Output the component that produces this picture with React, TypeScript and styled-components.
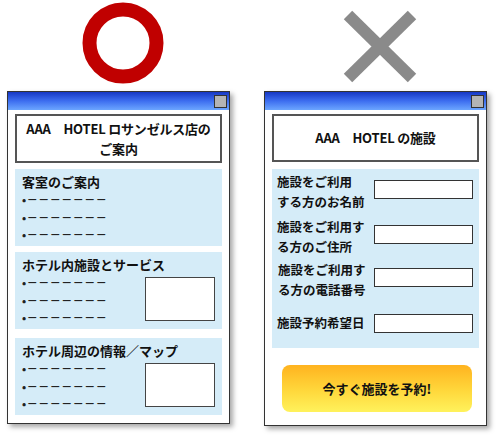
import styled, { createGlobalStyle } from 'styled-components';

const GlobalStyle = createGlobalStyle`
  html, body {
    margin: 0;
    padding: 0;
    background: #ffffff;
  }
  body {
    font-family: 'Noto Sans CJK JP', 'Noto Sans', sans-serif;
    color: #111111;
  }
`;

const Page = styled.div`
  display: flex;
  width: 499px;
  height: 438px;
  padding-left: 7px;
  box-sizing: border-box;
  gap: 34px;
`;

const Column = styled.div`
  display: flex;
  flex-direction: column;
  width: 223px;
`;

const Mark = styled.svg`
  display: block;
  width: 223px;
  height: 91px;
`;

interface WindowType {
  $height: number;
}

const Window = styled.div<WindowType>`
  display: flex;
  flex-direction: column;
  height: ${(props) => props.$height}px;
  box-sizing: border-box;
  border: 1px solid #333333;
  background: #ffffff;
  box-shadow: 3px 3px 5px rgba(0, 0, 0, 0.35);
`;

const TitleBar = styled.div`
  display: flex;
  justify-content: flex-end;
  align-items: center;
  height: 18px;
  padding-right: 2px;
  background: linear-gradient(to bottom, #1637c4 0%, #3d6ef0 50%, #6ca6ff 100%);
`;

const CloseButton = styled.div`
  width: 11px;
  height: 11px;
  border: 1px solid #333333;
  background: #b4b4b4;
`;

const Body = styled.div`
  display: flex;
  flex-direction: column;
  padding: 4px 7px 0 7px;
`;

interface HeadingType {
  $height: number;
}

const Heading = styled.div<HeadingType>`
  display: flex;
  align-items: center;
  justify-content: center;
  height: ${(props) => props.$height}px;
  box-sizing: border-box;
  border: 2px solid #555555;
  font-size: 13px;
  font-weight: 700;
  line-height: 20px;
  text-align: center;
  letter-spacing: -0.2px;
`;

interface SectionType {
  $top: number;
}

const Section = styled.div<SectionType>`
  margin-top: ${(props) => props.$top}px;
  height: 77px;
  box-sizing: border-box;
  padding: 4px 7px 0 7px;
  background: #d5ecf8;
`;

const SectionTitle = styled.div`
  font-size: 13px;
  font-weight: 600;
  line-height: 18px;
`;

const SectionRow = styled.div`
  display: flex;
  justify-content: space-between;
  align-items: flex-start;
`;

const BulletList = styled.ul`
  margin: 0;
  padding: 0;
  list-style: none;
`;

const Bullet = styled.li`
  font-size: 11px;
  font-weight: 600;
  line-height: 17.5px;
  letter-spacing: 0.5px;
  color: #222222;
`;

const Thumb = styled.div`
  width: 70px;
  height: 44px;
  box-sizing: border-box;
  margin-top: 3px;
  border: 1px solid #444444;
  background: #ffffff;
`;

const Form = styled.div`
  display: flex;
  flex-direction: column;
  margin-top: 7px;
  height: 179px;
  box-sizing: border-box;
  padding: 0 6px 0 5px;
  background: #d5ecf8;
`;

interface FieldRowType {
  $top: number;
}

const FieldRow = styled.div<FieldRowType>`
  display: flex;
  align-items: flex-start;
  margin-top: ${(props) => props.$top}px;
`;

interface FieldLabelType {
  $indent?: number;
}

const FieldLabel = styled.div<FieldLabelType>`
  width: 97px;
  box-sizing: border-box;
  padding-left: ${(props) => props.$indent || 0}px;
  font-size: 12.5px;
  font-weight: 600;
  line-height: 19.5px;
`;

interface FieldInputType {
  $offset: number;
}

const FieldInput = styled.div<FieldInputType>`
  width: 99px;
  height: 19px;
  box-sizing: border-box;
  margin-top: ${(props) => props.$offset}px;
  border: 1px solid #333333;
  background: #ffffff;
`;

const ButtonWrap = styled.div`
  display: flex;
  justify-content: center;
  padding: 17px 0 0 3px;
`;

const ReserveButton = styled.div`
  display: flex;
  align-items: center;
  justify-content: center;
  width: 190px;
  height: 47px;
  border-radius: 8px;
  background: linear-gradient(to bottom, #ffb31f 0%, #ffd83c 55%, #fff25c 100%);
  font-size: 13px;
  font-weight: 700;
  color: #111111;
`;

const DASHES = '•－－－－－－－';

const sections = [
  { title: '客室のご案内', thumb: false, top: 6 },
  { title: 'ホテル内施設とサービス', thumb: true, top: 6 },
  { title: 'ホテル周辺の情報／マップ', thumb: true, top: 9 },
];

const fields = [
  { lines: ['施設をご利用', 'する方のお名前'], top: 3, indent: 0 },
  { lines: ['施設をご利用す', 'る方のご住所'], top: 6, indent: 0 },
  { lines: ['施設をご利用す', 'る方の電話番号'], top: 4, indent: 1 },
  { lines: ['施設予約希望日'], top: 14, indent: 0 },
];

export default function App() {
  return (
    <>
      <GlobalStyle />
      <Page>
        <Column>
          <Mark viewBox='0 0 223 91'>
            <circle cx='116' cy='43' r='33.5' fill='none' stroke='#c00000' strokeWidth='14' />
          </Mark>
          <Window $height={333}>
            <TitleBar>
              <CloseButton />
            </TitleBar>
            <Body>
              <Heading $height={49}>
                <span>
                  AAA　HOTEL ロサンゼルス店の
                  <br />
                  ご案内
                </span>
              </Heading>
              {sections.map((sec) => (
                <Section key={sec.title} $top={sec.top}>
                  <SectionTitle>{sec.title}</SectionTitle>
                  <SectionRow>
                    <BulletList>
                      <Bullet>{DASHES}</Bullet>
                      <Bullet>{DASHES}</Bullet>
                      <Bullet>{DASHES}</Bullet>
                    </BulletList>
                    {sec.thumb && <Thumb />}
                  </SectionRow>
                </Section>
              ))}
            </Body>
          </Window>
        </Column>
        <Column>
          <Mark viewBox='0 0 223 91'>
            <g stroke='#8a8a8a' strokeWidth='12'>
              <line x1='84' y1='15' x2='148' y2='78' />
              <line x1='148' y1='15' x2='84' y2='78' />
            </g>
          </Mark>
          <Window $height={335}>
            <TitleBar>
              <CloseButton />
            </TitleBar>
            <Body>
              <Heading $height={48}>AAA　HOTEL の施設</Heading>
              <Form>
                {fields.map((f) => (
                  <FieldRow key={f.lines.join('')} $top={f.top}>
                    <FieldLabel $indent={f.indent}>
                      {f.lines.map((l) => (
                        <div key={l}>{l}</div>
                      ))}
                    </FieldLabel>
                    <FieldInput $offset={f.lines.length > 1 ? 8 : 1} />
                  </FieldRow>
                ))}
              </Form>
              <ButtonWrap>
                <ReserveButton>今すぐ施設を予約!</ReserveButton>
              </ButtonWrap>
            </Body>
          </Window>
        </Column>
      </Page>
    </>
  );
}
